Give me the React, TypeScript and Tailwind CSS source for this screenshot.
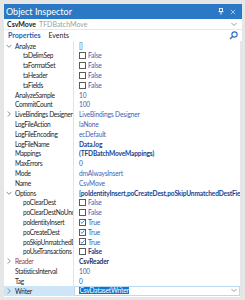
import React from "react";

type Row = {
  name: string;
  value?: string;
  level?: number;
  expand?: "open" | "closed";
  check?: boolean;
  bold?: boolean;
  nameColor?: string;
  valueColor?: string;
  selected?: boolean;
};

const rows: Row[] = [
  { name: "Analyze", value: "[]", expand: "open" },
  { name: "taDelimSep", value: "False", level: 1, check: false },
  { name: "taFormatSet", value: "False", level: 1, check: false },
  { name: "taHeader", value: "False", level: 1, check: false },
  { name: "taFields", value: "False", level: 1, check: false },
  { name: "AnalyzeSample", value: "10" },
  { name: "CommitCount", value: "100" },
  { name: "LiveBindings Designer", value: "LiveBindings Designer", expand: "closed" },
  { name: "LogFileAction", value: "laNone" },
  { name: "LogFileEncoding", value: "ecDefault" },
  { name: "LogFileName", value: "Data.log", bold: true },
  { name: "Mappings", value: "(TFDBatchMoveMappings)", bold: true },
  { name: "MaxErrors", value: "0" },
  { name: "Mode", value: "dmAlwaysInsert" },
  { name: "Name", value: "CsvMove" },
  { name: "Options", value: "[poIdentityInsert,poCreateDest,poSkipUnmatchedDestFields]", expand: "open", bold: true },
  { name: "poClearDest", value: "False", level: 1, check: false },
  { name: "poClearDestNoUndo", value: "False", level: 1, check: false },
  { name: "poIdentityInsert", value: "True", level: 1, check: true },
  { name: "poCreateDest", value: "True", level: 1, check: true },
  { name: "poSkipUnmatchedDestFields", value: "True", level: 1, check: true },
  { name: "poUseTransactions", value: "False", level: 1, check: false, bold: true },
  { name: "Reader", value: "CsvReader", expand: "closed", nameColor: "text-[#a33a2e]", valueColor: "text-[#1f2f5c]", bold: true },
  { name: "StatisticsInterval", value: "100" },
  { name: "Tag", value: "0" },
  { name: "Writer", value: "CsvDatasetWriter", expand: "closed", selected: true },
];

function Chevron({ dir }: { dir: "open" | "closed" }) {
  return (
    <svg width="6" height="6" viewBox="0 0 6 6" className="shrink-0">
      {dir === "open" ? (
        <polyline points="0.5,1.8 3,4.3 5.5,1.8" fill="none" stroke="#707070" strokeWidth="0.8" />
      ) : (
        <polyline points="1.8,0.5 4.3,3 1.8,5.5" fill="none" stroke="#707070" strokeWidth="0.8" />
      )}
    </svg>
  );
}

function Check({ on }: { on: boolean }) {
  return (
    <div className="w-[7px] h-[7px] border border-[#5a5a5a] bg-white flex items-center justify-center shrink-0">
      {on && (
        <svg width="6" height="6" viewBox="0 0 6 6">
          <polyline points="0.8,3 2.4,4.6 5.3,1" fill="none" stroke="#2b6cc4" strokeWidth="1" />
        </svg>
      )}
    </div>
  );
}

export default function App() {
  return (
    <div
      className="w-[245px] h-[300px] bg-[#e6e6e6] pt-[4px] pl-[4px] pr-[3px] pb-[3px] flex flex-col overflow-hidden"
      style={{ fontFamily: 'Lato, "Open Sans", sans-serif' }}
    >
      {/* Title bar */}
      <div className="h-[15px] bg-[#2b79c4] flex items-center pl-[2px] pr-[6px] shrink-0">
        <span className="text-white text-[9px] leading-none flex-1">Object Inspector</span>
        <svg width="6" height="7" viewBox="0 0 6 7" className="mr-[6px]">
          <rect x="1.5" y="0.5" width="3" height="3" fill="none" stroke="white" strokeWidth="0.8" />
          <line x1="0.5" y1="3.7" x2="5.5" y2="3.7" stroke="white" strokeWidth="0.8" />
          <line x1="3" y1="4" x2="3" y2="6.8" stroke="white" strokeWidth="0.8" />
        </svg>
        <svg width="6" height="6" viewBox="0 0 6 6">
          <line x1="0.8" y1="0.8" x2="5.2" y2="5.2" stroke="#d6e6f6" strokeWidth="0.7" />
          <line x1="5.2" y1="0.8" x2="0.8" y2="5.2" stroke="#d6e6f6" strokeWidth="0.7" />
        </svg>
      </div>
      {/* Component combo */}
      <div className="h-[11px] bg-white flex items-center pl-[3px] pr-[5px] shrink-0 border-b border-[#e8e8e8]">
        <span className="text-[7px] leading-none font-bold text-[#222]">CsvMove</span>
        <span className="text-[7px] leading-none text-[#a0a0a0] ml-[3px] flex-1">TFDBatchMove</span>
        <svg width="6" height="5" viewBox="0 0 6 5">
          <polyline points="0.5,1 3,3.5 5.5,1" fill="none" stroke="#808080" strokeWidth="0.8" />
        </svg>
      </div>
      {/* Tabs */}
      <div className="h-[11px] bg-white flex items-end shrink-0 pr-[4px]">
        <div className="h-[11px] pl-[4px] pr-[4px] flex items-center bg-white">
          <span className="text-[7px] leading-none text-[#1d5fb5] font-bold">Properties</span>
        </div>
        <div className="h-[11px] px-[4px] flex items-center">
          <span className="text-[7px] leading-none text-[#222]">Events</span>
        </div>
        <div className="flex-1" />
        <svg width="9" height="9" viewBox="0 0 9 9" className="mb-[1px]">
          <circle cx="5.5" cy="3.5" r="2.6" fill="none" stroke="#2b6cc4" strokeWidth="1.1" />
          <line x1="3.6" y1="5.4" x2="1" y2="8" stroke="#2b6cc4" strokeWidth="1.4" />
        </svg>
      </div>
      {/* Grid */}
      <div className="flex-1 flex bg-white">
        <div className="flex-1 flex flex-col min-w-0">
          {rows.map((r, i) => (
            <div key={i} className="h-[9.8px] flex items-stretch">
              <div
                className={`w-[69px] shrink-0 flex items-center overflow-hidden whitespace-nowrap ${
                  r.selected ? "bg-[#cde5f7]" : ""
                }`}
              >
                <div className={`${r.level ? "w-[19px]" : "w-[11px]"} shrink-0 flex items-center justify-end pr-[3px]`}>
                  {r.expand && !r.level && <Chevron dir={r.expand} />}
                </div>
                <span className={`text-[6.6px] tracking-[-0.3px] leading-none ${r.nameColor ?? "text-[#1e1e1e]"}`}>{r.name}</span>
              </div>
              <div className="w-[1px] bg-[#e3e3e3] shrink-0" />
              {r.selected ? (
                <div className="flex-1 flex items-center pl-[4px] border border-[#bcd9f2]">
                  <span className="bg-[#0a77d6] text-white text-[6.6px] tracking-[-0.15px] leading-[7px] px-[0.5px]">{r.value}</span>
                  <div className="flex-1" />
                  <svg width="6" height="5" viewBox="0 0 6 5" className="mr-[2px]">
                    <polyline points="0.5,1 3,3.5 5.5,1" fill="none" stroke="#808080" strokeWidth="0.8" />
                  </svg>
                </div>
              ) : (
                <div className="flex-1 flex items-center pl-[5px] overflow-hidden whitespace-nowrap gap-[2px] min-w-0">
                  {r.check !== undefined && <Check on={r.check} />}
                  <span
                    className={`text-[6.6px] tracking-[-0.15px] leading-none ${r.valueColor ?? (r.bold ? "text-[#1b3f8f]" : "text-[#3b63b0]")} ${
                      r.bold ? "font-bold" : ""
                    }`}
                  >
                    {r.value}
                  </span>
                </div>
              )}
            </div>
          ))}
        </div>
        <div className="w-[2px] bg-[#e6e6e6] shrink-0" />
      </div>
    </div>
  );
}
